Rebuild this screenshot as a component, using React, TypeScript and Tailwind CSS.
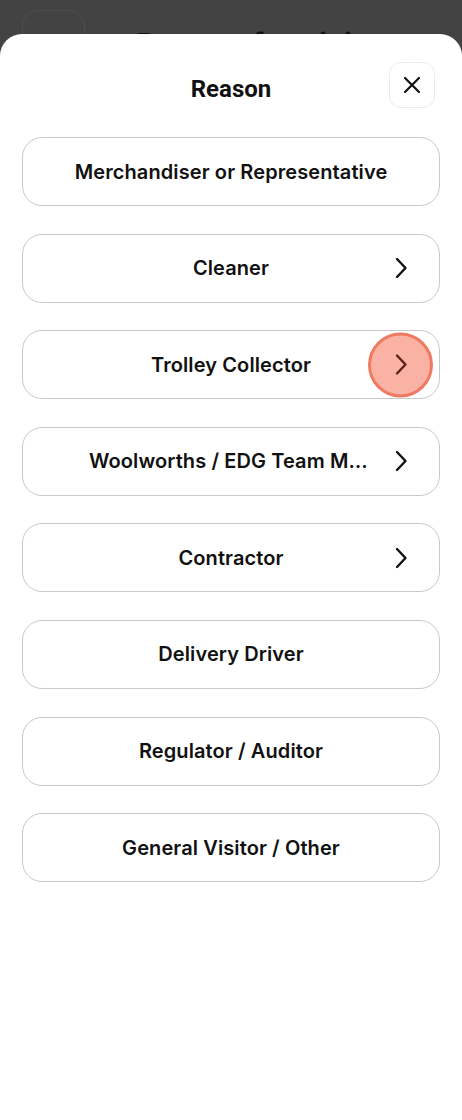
import React from 'react'

interface Reason {
    label: string
    hasNext: boolean
}

const reasons: Reason[] = [
    { label: 'Merchandiser or Representative', hasNext: false },
    { label: 'Cleaner', hasNext: true },
    { label: 'Trolley Collector', hasNext: true },
    { label: 'Woolworths / EDG Team Member', hasNext: true },
    { label: 'Contractor', hasNext: true },
    { label: 'Delivery Driver', hasNext: false },
    { label: 'Regulator / Auditor', hasNext: false },
    { label: 'General Visitor / Other', hasNext: false },
]

const Chevron = ({ color = '#111' }: { color?: string }) => (
    <svg width="14" height="24" viewBox="0 0 14 24" fill="none">
        <path d="M3 3 L11.5 12 L3 21" stroke={color} strokeWidth="2.4" strokeLinecap="round" strokeLinejoin="round" />
    </svg>
)

const ReasonRow = ({ reason, tapped }: { reason: Reason; tapped?: boolean }) => (
    <div className={`relative h-[69px] flex items-center justify-center rounded-[20px] border border-[#c9c9c9] bg-white ${reason.hasNext ? 'px-[66px]' : 'px-4'}`}>
        <span className="truncate text-[20px] font-semibold text-[#111] tracking-[0.1px]">{reason.label}</span>
        {reason.hasNext && (
            <div className="absolute right-[31px] top-0 bottom-0 flex items-center">
                <Chevron />
            </div>
        )}
        {tapped && (
            <div className="absolute right-[6px] top-1/2 -translate-y-1/2 w-[65px] h-[65px] rounded-full bg-[#f9b2a3] border-[3px] border-[#ee7a62] flex items-center justify-center">
                <Chevron color="#5a2218" />
            </div>
        )}
    </div>
)

const App = () => {
    return (
        <div className="w-[462px] h-[1120px] bg-[#434343] flex flex-col overflow-hidden" style={{ fontFamily: 'Inter, "Noto Sans", sans-serif' }}>
            {/* page behind the sheet */}
            <div className="h-[34px] overflow-hidden shrink-0">
                <div className="flex items-start gap-[51px] pl-[22px] pt-[10px]">
                    <div className="w-[63px] h-[60px] rounded-[16px] border border-[#4d4d4d] flex items-center justify-center pt-[30px]">
                        <span className="text-[#111] text-[22px] font-bold">‹</span>
                    </div>
                    <span className="mt-[12px] text-[30px] font-bold text-[#111] whitespace-nowrap">Reason for visit</span>
                </div>
            </div>

            {/* sheet */}
            <div className="flex-1 bg-white rounded-t-[22px] flex flex-col">
                <div className="relative h-[103px] flex items-center justify-center pt-[6px]">
                    <h2 className="text-[24px] font-bold text-[#111]" style={{ fontFamily: 'Roboto, sans-serif' }}>Reason</h2>
                    <button className="absolute right-[27px] top-[28px] w-[46px] h-[46px] rounded-[12px] border border-[#ececec] flex items-center justify-center">
                        <svg width="18" height="18" viewBox="0 0 18 18" fill="none">
                            <path d="M2 2 L16 16 M16 2 L2 16" stroke="#111" strokeWidth="2.2" strokeLinecap="round" />
                        </svg>
                    </button>
                </div>
                <div className="flex flex-col gap-[27.6px] px-[22px]">
                    {reasons.map((reason, index) => (
                        <ReasonRow key={index} reason={reason} tapped={index === 2} />
                    ))}
                </div>
            </div>
        </div>
    )
}

export default App
